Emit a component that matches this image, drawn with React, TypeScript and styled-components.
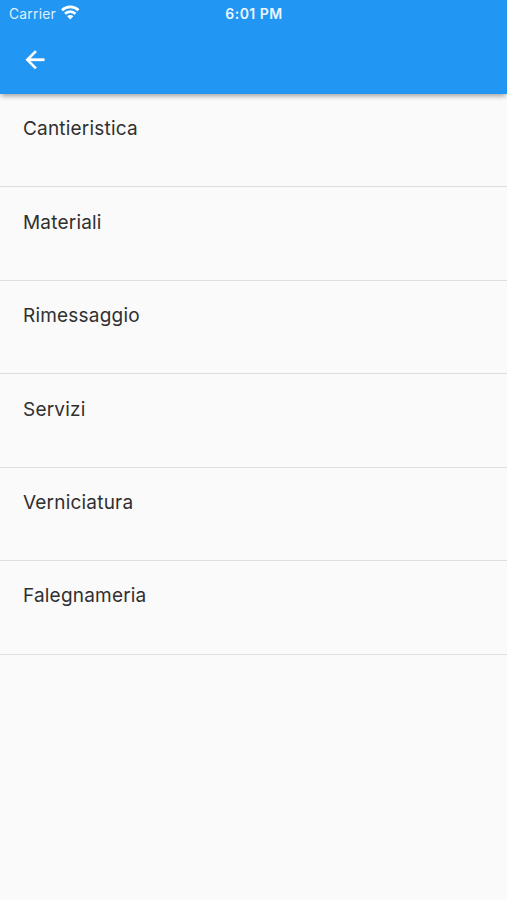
import React from 'react';
import styled, { createGlobalStyle } from 'styled-components';

const GlobalStyle = createGlobalStyle`
  * { box-sizing: border-box; }
  body { margin: 0; background: #fafafa; font-family: Inter, sans-serif; }
`;

const Screen = styled.div`
  height: 900px;
  display: flex;
  flex-direction: column;
  background: #fafafa;
  overflow: hidden;
`;

const Header = styled.header`
  height: 94px;
  flex: none;
  background: #2196f3;
  color: #fff;
  box-shadow: 0 3px 5px -1px rgba(0, 0, 0, 0.36);
`;

const StatusBar = styled.div`
  height: 27px;
  display: grid;
  grid-template-columns: 1fr auto 1fr;
  align-items: center;
  padding: 0 9px;
`;

const Carrier = styled.div`
  display: flex;
  align-items: center;
  gap: 5.5px;
  font-size: 13.8px;
  letter-spacing: 0.25px;
  color: #e0f0fe;
`;

const WifiIcon = styled.svg`
  margin-top: -2px;
`;

const Clock = styled.time`
  padding-left: 1px;
  font-size: 14px;
  font-weight: 600;
  letter-spacing: 0.5px;
  color: #edf6fe;
`;

const Toolbar = styled.div`
  height: 65px;
  display: flex;
  align-items: center;
  padding-left: 21px;
`;

const BackButton = styled.button`
  display: flex;
  padding: 0;
  border: 0;
  background: none;
  color: inherit;
`;

const List = styled.ul`
  margin: 0;
  padding: 0;
  list-style: none;
`;

const Item = styled.li`
  height: 93.45px;
  padding: 23.3px 23px 0;
  border-bottom: 1px solid #dedede;
  font-size: 19px;
  line-height: 24px;
  letter-spacing: 0.2px;
  color: #303030;
`;

const categories = ['Cantieristica', 'Materiali', 'Rimessaggio', 'Servizi', 'Verniciatura', 'Falegnameria'];

export default function App() {
  return (
    <Screen>
      <GlobalStyle />
      <Header>
        <StatusBar>
          <Carrier>
            Carrier
            <WifiIcon width="18.5" height="14.5" viewBox="0 0 18 14" fill="none" stroke="#fff" strokeWidth="2.7">
              <path d="M1 5.1a11.4 11.4 0 0 1 16 0M3.9 8.5a7.3 7.3 0 0 1 10.2 0" />
              <path d="M9 14 6 10.9a4.2 4.2 0 0 1 6 0Z" fill="#fff" stroke="none" />
            </WifiIcon>
          </Carrier>
          <Clock>6:01 PM</Clock>
        </StatusBar>
        <Toolbar>
          <BackButton aria-label="Back">
            <svg width="28" height="28" viewBox="0 0.2 24 24" fill="currentColor" stroke="currentColor" strokeWidth="0.35" strokeLinejoin="round">
              <path d="M20 11H7.83l5.59-5.59L12 4l-8 8 8 8 1.41-1.41L7.83 13H20v-2z" />
            </svg>
          </BackButton>
        </Toolbar>
      </Header>
      <List>
        {categories.map((name) => <Item key={name}>{name}</Item>)}
      </List>
    </Screen>
  );
}
